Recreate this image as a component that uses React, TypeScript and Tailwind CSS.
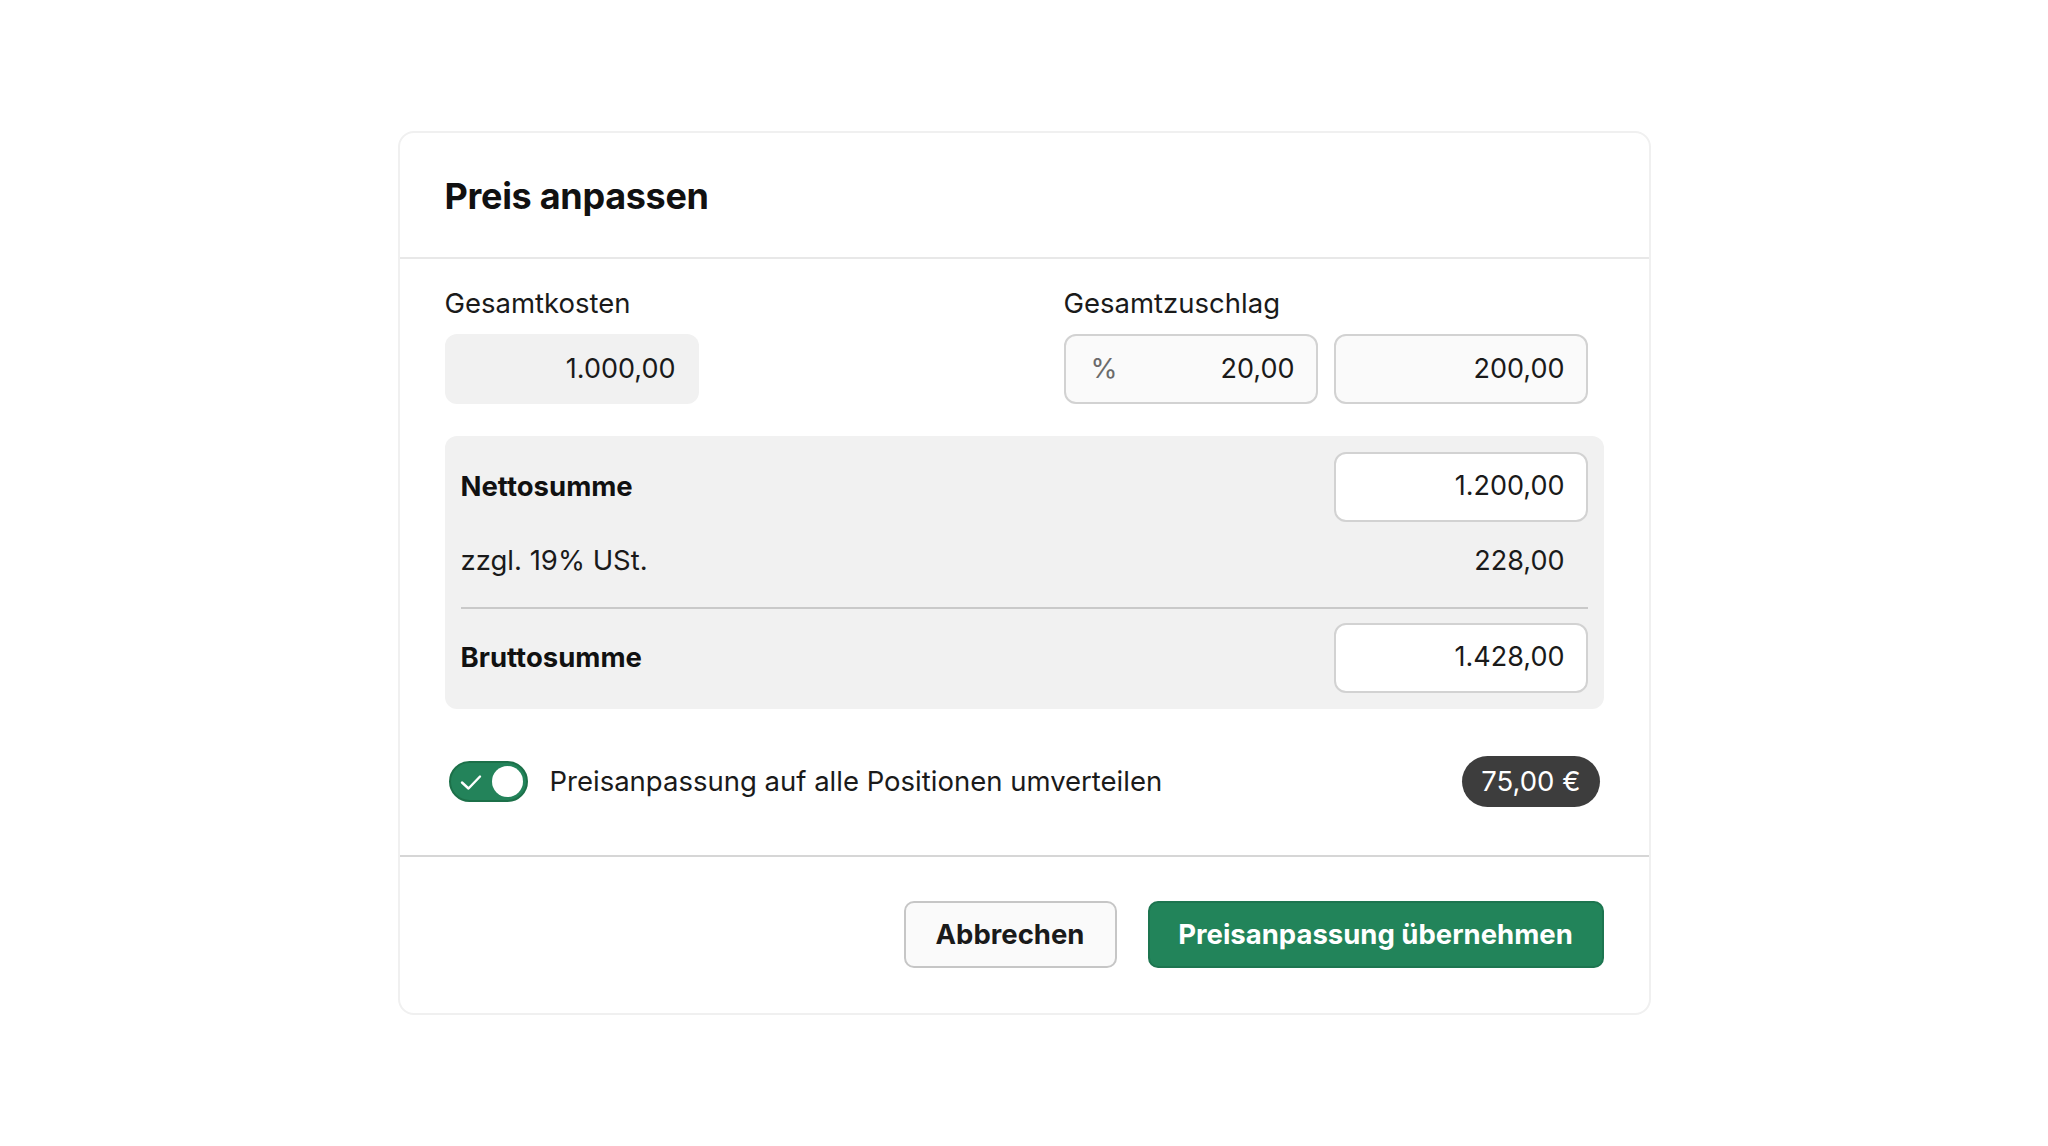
import { useState } from 'react';

function Feld({ wert, variante, praefix }: { wert: string; variante: 'grau' | 'hell' | 'weiss'; praefix?: string }) {
  const stil =
    variante === 'grau'
      ? 'bg-[#f1f1f1] border-2 border-transparent'
      : variante === 'hell'
      ? 'bg-[#fafafa] border-2 border-[#d2d2d2]'
      : 'bg-white border-2 border-[#d2d2d2]';
  return (
    <div className={`w-[254px] h-[70px] rounded-[12px] flex items-center justify-between pl-[25px] pr-[21px] ${stil}`}>
      <span className="text-[27.5px] text-[#6b6b6b]">{praefix ?? ''}</span>
      <span className="text-[27px] text-[#1a1a1a]">{wert}</span>
    </div>
  );
}

export default function App() {
  const [umverteilen, setUmverteilen] = useState(true);

  return (
    <main className="min-h-screen w-full bg-white flex justify-center items-start pt-[131px]" style={{ fontFamily: 'Inter, "Noto Sans", sans-serif' }}>
      <div className="w-[1253px] rounded-[16px] border-2 border-[#f0f0f0] bg-white flex flex-col">
        {/* Kopf */}
        <div className="shrink-0 h-[126px] px-[45px] flex items-center border-b-2 border-[#e8e8e8]">
          <h1 className="text-[36px] font-bold text-[#111111] tracking-[-0.3px] mt-[2px]">Preis anpassen</h1>
        </div>

        {/* Inhalt */}
        <div className="shrink-0 px-[45px] pt-[28px] pb-[48px]">
          <div className="flex">
            <div className="w-[619px] flex flex-col gap-[15px]">
              <span className="text-[27.5px] leading-[32px] text-[#1a1a1a]">Gesamtkosten</span>
              <Feld wert="1.000,00" variante="grau" />
            </div>
            <div className="flex flex-col gap-[15px]">
              <span className="text-[27.5px] leading-[32px] text-[#1a1a1a]">Gesamtzuschlag</span>
              <div className="flex gap-[16px]">
                <Feld wert="20,00" variante="hell" praefix="%" />
                <Feld wert="200,00" variante="hell" />
              </div>
            </div>
          </div>

          <div className="mt-[32px] w-[1159px] rounded-[12px] bg-[#f1f1f1] px-[16px] pt-[16px] pb-[17px]">
            <div className="flex items-center justify-between h-[69px]">
              <span className="text-[27.5px] font-bold text-[#111111]">Nettosumme</span>
              <Feld wert="1.200,00" variante="weiss" />
            </div>
            <div className="flex items-center justify-between h-[32px] mt-[24px] mb-[30px] pr-[23px]">
              <span className="text-[27.5px] text-[#1a1a1a]">zzgl. 19% USt.</span>
              <span className="text-[27px] text-[#1a1a1a]">228,00</span>
            </div>
            <div className="h-[2px] bg-[#c9c9c9]" />
            <div className="flex items-center justify-between h-[69px] mt-[14px]">
              <span className="text-[27.5px] font-bold text-[#111111]">Bruttosumme</span>
              <Feld wert="1.428,00" variante="weiss" />
            </div>
          </div>

          <div className="mt-[47px] w-[1159px] h-[51px] flex items-center justify-between pl-[4px] pr-[4px]">
            <div className="flex items-center gap-[22px]">
              <button
                onClick={() => setUmverteilen(!umverteilen)}
                className={`w-[79px] h-[41px] rounded-full border-2 flex items-center px-[3px] ${
                  umverteilen ? 'bg-[#23835a] border-[#1c7049] justify-between' : 'bg-[#d9d9d9] border-[#c4c4c4] justify-start'
                }`}
              >
                {umverteilen && (
                  <svg width="24" height="24" viewBox="0 0 24 24" fill="none" stroke="white" strokeWidth="2.4" strokeLinecap="round" strokeLinejoin="round" className="ml-[5px]">
                    <polyline points="3 12.5 9.5 18.5 21 6.5" />
                  </svg>
                )}
                <span className="w-[31px] h-[31px] rounded-full bg-white" />
              </button>
              <span className="text-[27.5px] text-[#1a1a1a]">Preisanpassung auf alle Positionen umverteilen</span>
            </div>
            <span className="h-[51px] px-[19px] rounded-full bg-[#3d3d3d] text-white text-[27.5px] flex items-center">75,00 €</span>
          </div>
        </div>

        {/* Fuß */}
        <div className="shrink-0 border-t-2 border-[#d6d6d6] pt-[44px] pb-[45px] pr-[45px] flex justify-end gap-[31px]">
          <button className="w-[213px] h-[67px] rounded-[10px] border-2 border-[#c6c6c6] bg-[#fafafa] text-[27.5px] font-bold text-[#1a1a1a]">
            Abbrechen
          </button>
          <button className="w-[456px] h-[67px] rounded-[10px] border-2 border-[#1d7550] bg-[#22845a] text-[27.5px] font-bold text-white">
            Preisanpassung übernehmen
          </button>
        </div>
      </div>
    </main>
  );
}
